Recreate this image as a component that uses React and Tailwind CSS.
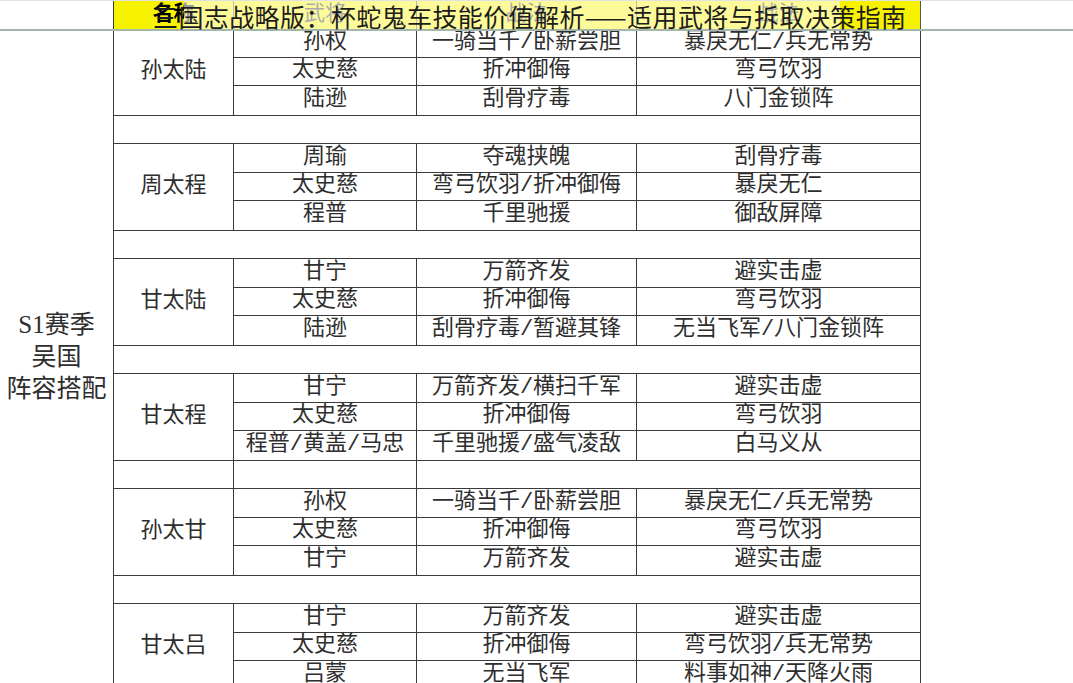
import React from "react";

const groups = [
  {
    name: "孙太陆",
    rows: [
      ["孙权", "一骑当千/卧薪尝胆", "暴戾无仁/兵无常势"],
      ["太史慈", "折冲御侮", "弯弓饮羽"],
      ["陆逊", "刮骨疗毒", "八门金锁阵"],
    ],
  },
  {
    name: "周太程",
    rows: [
      ["周瑜", "夺魂挟魄", "刮骨疗毒"],
      ["太史慈", "弯弓饮羽/折冲御侮", "暴戾无仁"],
      ["程普", "千里驰援", "御敌屏障"],
    ],
  },
  {
    name: "甘太陆",
    rows: [
      ["甘宁", "万箭齐发", "避实击虚"],
      ["太史慈", "折冲御侮", "弯弓饮羽"],
      ["陆逊", "刮骨疗毒/暂避其锋", "无当飞军/八门金锁阵"],
    ],
  },
  {
    name: "甘太程",
    rows: [
      ["甘宁", "万箭齐发/横扫千军", "避实击虚"],
      ["太史慈", "折冲御侮", "弯弓饮羽"],
      ["程普/黄盖/马忠", "千里驰援/盛气凌敌", "白马义从"],
    ],
  },
  {
    name: "孙太甘",
    rows: [
      ["孙权", "一骑当千/卧薪尝胆", "暴戾无仁/兵无常势"],
      ["太史慈", "折冲御侮", "弯弓饮羽"],
      ["甘宁", "万箭齐发", "避实击虚"],
    ],
  },
  {
    name: "甘太吕",
    rows: [
      ["甘宁", "万箭齐发", "避实击虚"],
      ["太史慈", "折冲御侮", "弯弓饮羽/兵无常势"],
      ["吕蒙", "无当飞军", "料事如神/天降火雨"],
    ],
  },
];

const cellFont = { fontFamily: '"Liberation Mono", "Noto Sans CJK SC", sans-serif' };

function Group({ group }) {
  return (
    <div className="flex border-b border-[#3a3a3a]">
      <div className="w-[120px] shrink-0 border-r border-[#3a3a3a] flex items-center justify-center">
        {group.name}
      </div>
      <div className="flex flex-col">
        {group.rows.map((row, i) => (
          <div
            key={i}
            className={`flex h-[28.5px] ${i < 2 ? "border-b border-[#3a3a3a]" : ""}`}
          >
            <div className="w-[183px] shrink-0 border-r border-[#3a3a3a] flex items-center justify-center">
              {row[0]}
            </div>
            <div className="w-[220px] shrink-0 border-r border-[#3a3a3a] flex items-center justify-center">
              {row[1]}
            </div>
            <div className="w-[284px] shrink-0 border-r border-[#3a3a3a] flex items-center justify-center">
              {row[2]}
            </div>
          </div>
        ))}
      </div>
    </div>
  );
}

function Spacer({ lined }) {
  return (
    <div className="flex h-[28.5px] border-b border-[#3a3a3a]">
      {lined ? (
        <>
          <div className="w-[120px] border-r border-[#3a3a3a]" />
          <div className="w-[183px] border-r border-[#3a3a3a]" />
          <div className="w-[504px] border-r border-[#3a3a3a]" />
        </>
      ) : (
        <div className="w-[807px] border-r border-[#3a3a3a]" />
      )}
    </div>
  );
}

export default function App() {
  return (
    <div className="relative w-[1073px] h-[683px] overflow-hidden bg-white text-[#2e2e2e]">
      {/* header row */}
      <div className="flex h-[29px]">
        <div className="w-[113px] shrink-0" />
        <div className="flex border-l border-[#3a3a3a] text-[21px]" style={cellFont}>
          <div className="w-[120px] border-r border-[#555] bg-[#f7f300] flex items-center justify-center font-bold text-black">
            名称
          </div>
          <div className="w-[183px] border-r border-[#555] bg-[#f7f300] flex items-center justify-center">
            武将
          </div>
          <div className="w-[220px] border-r border-[#555] bg-[#f7f300] flex items-center justify-center">
            战法
          </div>
          <div className="w-[284px] border-r border-[#555] bg-[#f7f300] flex items-center justify-center">
            战法
          </div>
        </div>
      </div>

      {/* body */}
      <div className="flex">
        <div
          className="w-[113px] shrink-0 h-[655px] flex flex-col items-center justify-center text-[25px] leading-[32px]"
          style={{ fontFamily: '"Liberation Serif", "Noto Sans CJK SC", serif' }}
        >
          <div>S1赛季</div>
          <div>吴国</div>
          <div>阵容搭配</div>
        </div>
        <div className="flex flex-col border-l border-[#3a3a3a] text-[22px] leading-none" style={cellFont}>
          {groups.map((g, i) => (
            <React.Fragment key={g.name}>
              <Group group={g} />
              {i < groups.length - 1 && <Spacer lined={i === 3} />}
            </React.Fragment>
          ))}
        </div>
      </div>

      {/* title overlay */}
      <div className="absolute left-0 top-0 w-full h-[31px] border-t border-[#e2e2e2] border-b-2 border-b-[#a3b7ad]">
        <div className="absolute left-[184px] top-0 w-[656px] h-full bg-white/60" />
        <div
          className="absolute left-[153px] top-[1px] whitespace-nowrap text-[25px] leading-[29px] tracking-[0.4px] text-[#1c1c1c]"
          style={{ fontFamily: '"Noto Sans CJK SC", sans-serif' }}
        >
          三国志战略版：杯蛇鬼车技能价值解析——适用武将与拆取决策指南
        </div>
      </div>
    </div>
  );
}
